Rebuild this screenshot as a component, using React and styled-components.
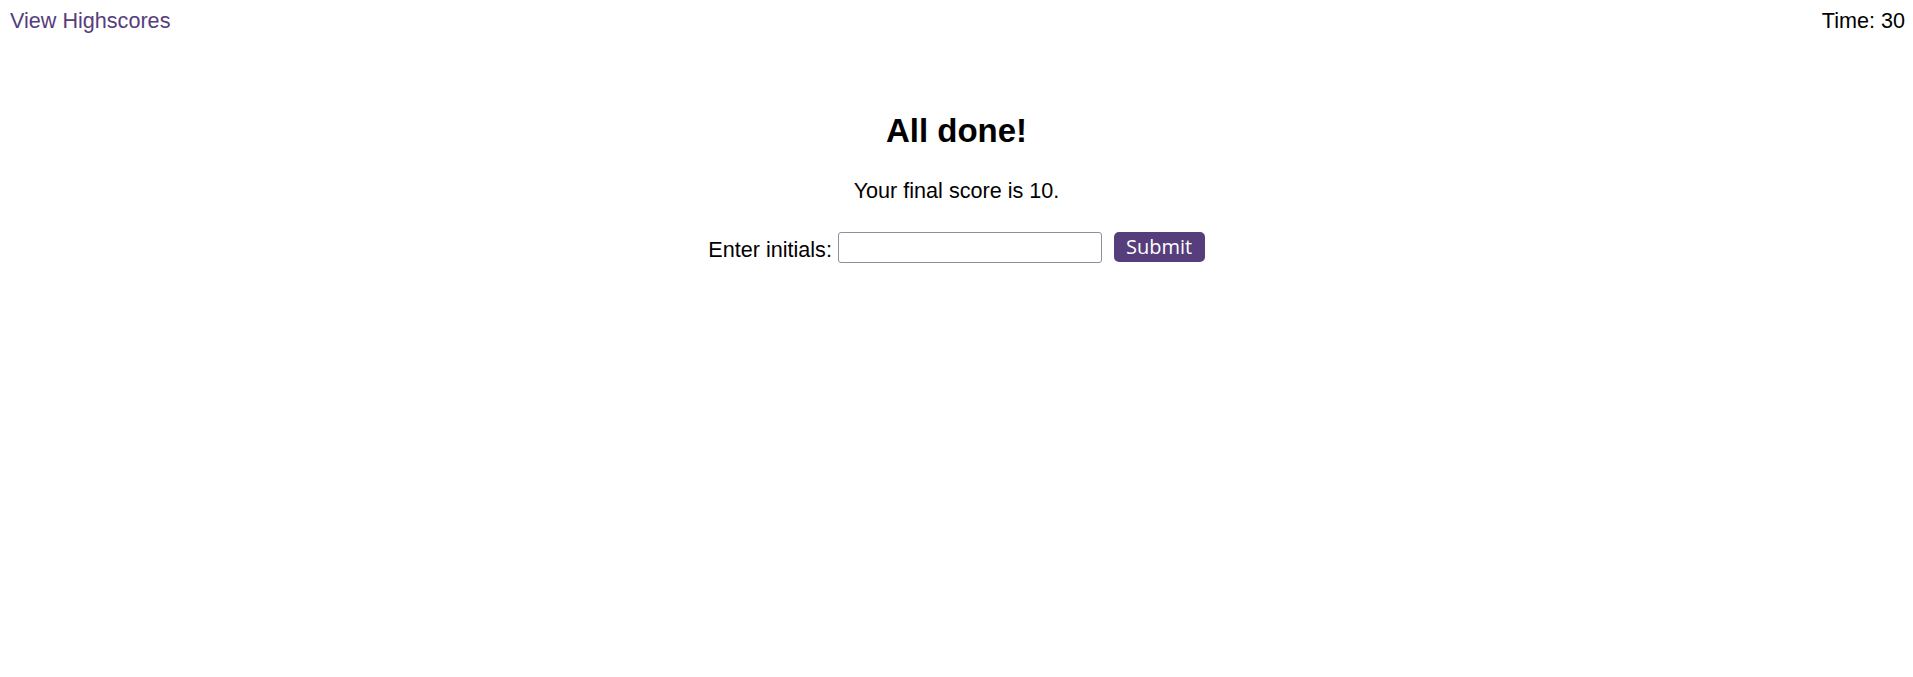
import styled, { createGlobalStyle } from 'styled-components'

const GlobalStyle = createGlobalStyle`
  body {
    margin: 0;
    background: #ffffff;
    font-family: "Liberation Sans", Arial, sans-serif;
    color: #000000;
  }
`

export default function App() {
  return (
    <>
      <GlobalStyle />
      <Header>
        <HighscoresLink href="#">View Highscores</HighscoresLink>
        <Timer>Time: 30</Timer>
      </Header>
      <Main>
        <Title>All done!</Title>
        <Score>Your final score is 10.</Score>
        <Form onSubmit={(e) => e.preventDefault()}>
          <Label htmlFor="initials">Enter initials:</Label>
          <Input id="initials" type="text" />
          <SubmitButton type="submit">Submit</SubmitButton>
        </Form>
      </Main>
    </>
  )
}

const Header = styled.header`
  display: flex;
  justify-content: space-between;
  align-items: flex-start;
  padding: 8px 8px 0 10px;
  font-size: 21.6px;
`

const HighscoresLink = styled.a`
  color: #563d7c;
  text-decoration: none;
`

const Timer = styled.div``

const Main = styled.main`
  display: flex;
  flex-direction: column;
  align-items: center;
  padding-top: 78px;
`

const Title = styled.h1`
  margin: 0;
  font-size: 33px;
  font-weight: bold;
`

const Score = styled.p`
  margin: 28px 0 0;
  font-size: 21.6px;
`

const Form = styled.form`
  display: flex;
  align-items: center;
  margin-top: 27.7px;
  font-size: 21.6px;
`

const Label = styled.label`
  margin-right: 6px;
  padding-top: 5px;
`

const Input = styled.input`
  box-sizing: border-box;
  width: 264px;
  height: 31px;
  border: 1px solid #8f8f9d;
  border-radius: 3px;
  padding: 2px 4px;
  font-size: 16px;
`

const SubmitButton = styled.button`
  box-sizing: border-box;
  height: 30px;
  margin-left: 11.6px;
  padding: 0 12.5px;
  border: none;
  border-radius: 5px;
  background: #563d7c;
  color: #ffffff;
  font-family: "Open Sans", "Liberation Sans", sans-serif;
  font-size: 20px;
  line-height: 30px;
  cursor: pointer;
`
